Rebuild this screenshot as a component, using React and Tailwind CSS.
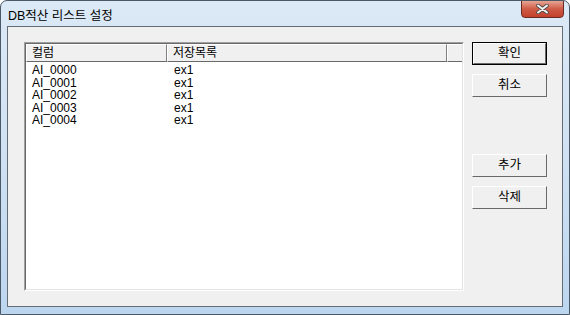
import React from "react";

const rows = [
  ["AI_0000", "ex1"],
  ["AI_0001", "ex1"],
  ["AI_0002", "ex1"],
  ["AI_0003", "ex1"],
  ["AI_0004", "ex1"],
];

const font = { fontFamily: '"Liberation Sans", "Noto Sans CJK KR", sans-serif' };

function Button({ label, isDefault }) {
  return (
    <div
      className={`w-[75px] h-[23px] ${isDefault ? "border border-black" : ""}`}
    >
      <div className="h-full w-full border-t border-l border-t-white border-l-white border-b border-r border-b-[#696969] border-r-[#696969] bg-[#f0f0f0] flex items-center justify-center text-[12.5px] text-black">
        {label}
      </div>
    </div>
  );
}

export default function App() {
  return (
    <div
      className="w-[570px] h-[315px] rounded-t-[7px] border border-[#4b5866] bg-gradient-to-b from-[#dce9f6] via-[#cfe1f3] to-[#bcd6ef] flex flex-col overflow-hidden"
      style={font}
    >
      <div className="h-[26px] flex items-start justify-between pl-[7px] pr-[5px]">
        <div className="text-[12.5px] text-black mt-[6px]">DB적산 리스트 설정</div>
        <div className="w-[43px] h-[18px] mt-[-1px] rounded-b-[4px] border border-[#6b2a22] bg-gradient-to-b from-[#e6a595] via-[#cf5a45] to-[#c2412c] flex items-center justify-center">
          <svg width="13" height="10" viewBox="0 0 13 10">
            <path
              d="M2 1.5 L11 8.5 M11 1.5 L2 8.5"
              stroke="#4a4a4a"
              strokeWidth="3.6"
              strokeLinecap="round"
            />
            <path
              d="M2 1.5 L11 8.5 M11 1.5 L2 8.5"
              stroke="#f4f4f4"
              strokeWidth="2"
              strokeLinecap="round"
            />
          </svg>
        </div>
      </div>
      <div className="mx-[6px] mb-[7px] flex-1 border border-[#646c75] bg-[#f0f0f0] flex pl-[16px] pt-[15px] pb-[15px] gap-[8px]">
        <div className="w-[440px] h-[249px] border-t border-l border-t-[#a0a0a0] border-l-[#a0a0a0] border-b border-r border-b-white border-r-white">
          <div className="h-full w-full border-t border-l border-t-[#696969] border-l-[#696969] border-b border-r border-b-[#e3e3e3] border-r-[#e3e3e3] bg-white flex flex-col">
            <div className="flex h-[18px] text-[12px] text-black">
              <div className="w-[141px] border-t border-l border-t-white border-l-white border-b border-r border-b-[#696969] border-r-[#808080] bg-[#f0f0f0] pl-[5px] leading-[17px]">
                컬럼
              </div>
              <div className="w-[280px] border-t border-l border-t-white border-l-white border-b border-r border-b-[#696969] border-r-[#808080] bg-[#f0f0f0] pl-[5px] leading-[17px]">
                저장목록
              </div>
              <div className="flex-1 border-t border-l border-t-white border-l-white border-b border-b-[#696969] bg-[#f0f0f0]"></div>
            </div>
            <div className="pt-[2px]">
              {rows.map((r) => (
                <div key={r[0]} className="flex h-[12.5px] text-[12px] leading-[12px] text-black">
                  <div className="w-[148px] pl-[6px]">{r[0]}</div>
                  <div>{r[1]}</div>
                </div>
              ))}
            </div>
          </div>
        </div>
        <div className="flex flex-col">
          <Button label="확인" isDefault />
          <div className="h-[9px]"></div>
          <Button label="취소" />
          <div className="h-[57px]"></div>
          <Button label="추가" />
          <div className="h-[9px]"></div>
          <Button label="삭제" />
        </div>
      </div>
    </div>
  );
}
